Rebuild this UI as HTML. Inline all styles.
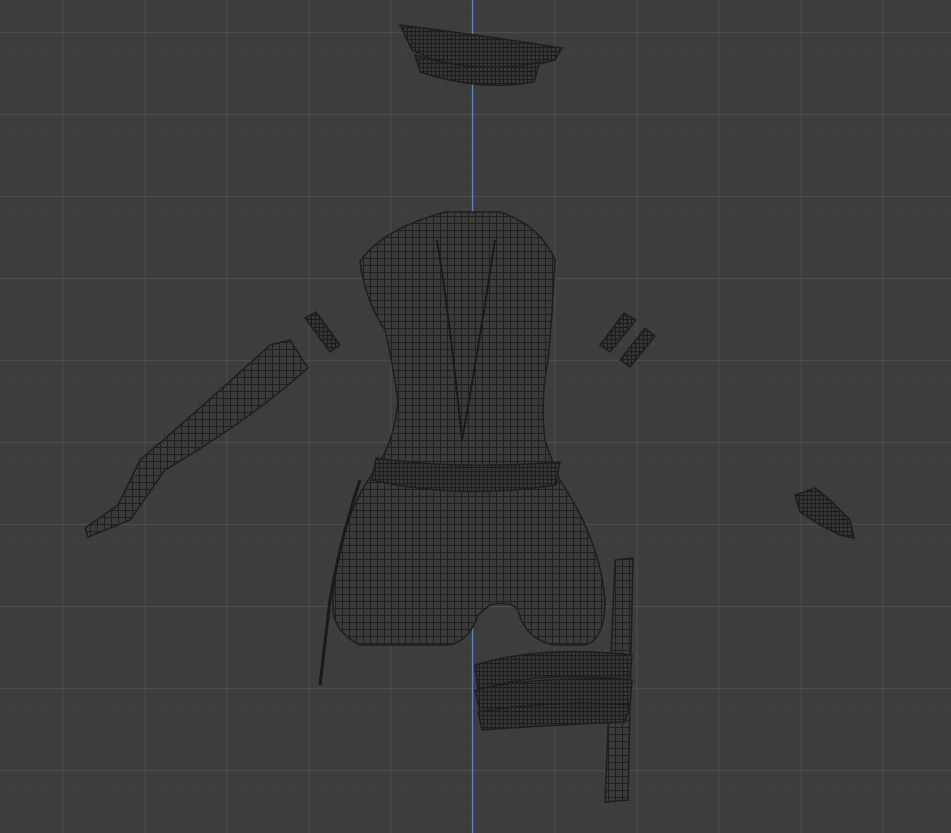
<!DOCTYPE html>
<html><head><meta charset="utf-8"><style>
html,body{margin:0;padding:0;background:#3d3d3d;width:951px;height:833px;overflow:hidden}
svg{display:block}
</style></head><body>
<svg width="951" height="833" viewBox="0 0 951 833" xmlns="http://www.w3.org/2000/svg">
<defs>
<pattern id="minor" x="-18.6" y="-15.2" width="16.4" height="16.4" patternUnits="userSpaceOnUse">
<path d="M16.4 0V16.4M0 16.4H16.4" stroke="#434343" stroke-width="1" fill="none"/>
</pattern>
<pattern id="major" x="-18.5" y="-49" width="82" height="82" patternUnits="userSpaceOnUse">
<path d="M81.5 0V82M0 81.5H82" stroke="#4c4c4c" stroke-width="1.2" fill="none"/>
</pattern>
<pattern id="wire" width="7" height="7" patternUnits="userSpaceOnUse">
<rect width="7" height="7" fill="#3b3b3b"/>
<path d="M6.5 0V7M0 6.5H7" stroke="#202020" stroke-width="1" fill="none"/>
</pattern>
<pattern id="wire2" width="4" height="4" patternUnits="userSpaceOnUse">
<rect width="4" height="4" fill="#353535"/>
<path d="M3.5 0V4M0 3.5H4" stroke="#1c1c1c" stroke-width="1" fill="none"/>
</pattern>
</defs>
<rect width="951" height="833" fill="#3d3d3d"/>
<rect width="951" height="833" fill="url(#minor)"/>
<rect width="951" height="833" fill="url(#major)"/>
<line x1="472.5" y1="0" x2="472.5" y2="833" stroke="#5a88c0" stroke-width="1.2"/>
<g stroke="#1e1e1e" stroke-width="1.5">
<!-- hat -->
<path d="M400 25 Q480 35 562 48 L555 60 Q520 70 480 68 Q440 65 412 50 Z" fill="url(#wire2)"/>
<path d="M415 55 Q480 75 540 62 L534 82 Q480 92 420 72 Z" fill="url(#wire2)"/>
<!-- torso -->
<path d="M445 212 L500 212 Q540 225 555 260 Q552 320 548 360 Q540 400 545 440 Q555 470 560 480 Q600 540 605 600 Q605 640 585 645 L555 645 Q525 640 518 610 Q510 600 490 605 L478 615 Q470 640 450 645 L360 645 Q330 630 333 600 Q338 520 375 470 Q395 440 398 400 Q390 350 385 330 Q365 300 360 262 Q380 230 445 212 Z" fill="url(#wire)"/>
<!-- collar opening -->
<path d="M437 240 Q450 320 462 440 Q480 340 495 240" fill="none" stroke="#1a1a1a" stroke-width="2"/>
<!-- belt -->
<path d="M376 458 Q460 470 560 462 L556 485 Q460 500 372 480 Z" fill="url(#wire2)"/>
<!-- chain -->
<path d="M360 480 Q340 540 330 600 L320 685" fill="none" stroke="#1a1a1a" stroke-width="3"/>
<!-- left arm -->
<path d="M270 345 L290 340 L308 368 Q250 420 165 470 L130 520 L88 537 L85 528 L118 505 L140 460 Q210 400 270 345 Z" fill="url(#wire)"/>
<path d="M305 318 L316 312 L340 345 L330 352 Z" fill="url(#wire2)"/>
<!-- right cuffs -->
<path d="M600 345 L624 313 L636 320 L610 352 Z" fill="url(#wire2)"/>
<path d="M620 360 L645 328 L655 336 L630 367 Z" fill="url(#wire2)"/>
<!-- right hand -->
<path d="M795 495 L815 488 L830 500 L850 520 L854 538 L840 535 L820 525 L800 512 Z" fill="url(#wire2)"/>
<!-- baton -->
<path d="M615 560 L633 558 L628 800 L605 802 Z" fill="url(#wire)"/>
<!-- thigh belt -->
<path d="M475 665 Q540 645 632 655 L630 680 Q540 670 478 690 Z" fill="url(#wire2)"/>
<path d="M475 690 Q540 675 632 680 L630 705 Q545 700 480 712 Z" fill="url(#wire2)"/>
<path d="M478 712 Q545 700 630 705 L625 722 Q550 725 482 730 Z" fill="url(#wire2)"/>
</g>
</svg>
</body></html>
